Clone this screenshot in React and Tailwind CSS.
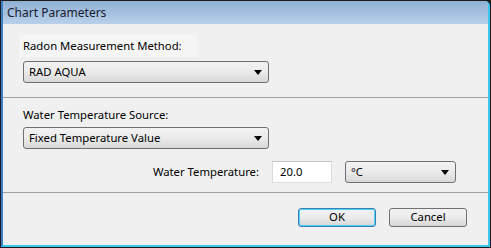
import React from 'react';

function Combo({ value, className = '' }) {
  return (
    <div
      className={`flex items-center justify-between rounded-[3px] border border-[#707070] bg-gradient-to-b from-[#f2f2f2] via-[#ebebeb] to-[#d8d8d8] pl-[5px] pr-[6px] ${className}`}
    >
      <span className="leading-none">{value}</span>
      <svg width="8" height="5" viewBox="0 0 8 5">
        <polygon points="0,0 8,0 4,5" fill="#000" />
      </svg>
    </div>
  );
}

function Button({ label, active }) {
  return (
    <div
      className={`flex items-center justify-center w-[78px] h-[19px] rounded-[3px] border bg-gradient-to-b from-[#f2f2f2] via-[#ebebeb] to-[#d6d6d6] ${
        active ? 'border-[#3c7fb1] shadow-[inset_0_0_0_1px_#48d2f8]' : 'border-[#707070]'
      }`}
    >
      {label}
    </div>
  );
}

export default function App() {
  return (
    <div
      className="w-[491px] h-[248px] bg-[#1c1c1c] p-px text-[11.3px] text-black"
      style={{ fontFamily: '"Noto Sans", "Open Sans", sans-serif' }}
    >
      <div className="h-full flex flex-col rounded-tr-[5px] bg-[#f0f0f0] border-l-2 border-l-[#3d7fc4] border-r-2 border-r-[#3cc6ef] border-b-2 border-b-[#3cc6ef] overflow-hidden">
        {/* Title bar */}
        <div className="h-[23px] flex items-center pl-[4px] bg-gradient-to-b from-[#8fb0d4] to-[#b8d0ea] text-[12px] text-[#1a1a2e]">
          Chart Parameters
        </div>

        {/* Measurement method */}
        <div className="flex flex-col pt-[11px] pl-[16px]">
          <div className="w-[178px] h-[22px] flex items-center pl-[4px] bg-[#f5f5f5]">
            Radon Measurement Method:
          </div>
          <Combo value="RAD AQUA" className="ml-[4px] mt-[4px] w-[246px] h-[22px]" />
        </div>

        <div className="mt-[14px] h-px bg-[#a0a0a0]" />

        {/* Water temperature */}
        <div className="flex flex-col pl-[20px] pr-[32px]">
          <div className="h-[16px] mt-[9px] flex items-center">Water Temperature Source:</div>
          <Combo value="Fixed Temperature Value" className="mt-[4px] w-[246px] h-[22px]" />
          <div className="flex items-center justify-end mt-[12px] h-[22px]">
            <span className="mr-[13px]">Water Temperature:</span>
            <div className="w-[60px] h-[22px] flex items-center pl-[7px] bg-white border border-[#dcdcdc] border-t-[#c5c5c5]">
              20.0
            </div>
            <Combo value="°C" className="ml-[13px] w-[111px] h-[22px]" />
          </div>
        </div>

        <div className="mt-[9px] h-px bg-[#a0a0a0]" />

        {/* Buttons */}
        <div className="flex justify-end gap-[13px] pt-[15px] pr-[21px]">
          <Button label="OK" active />
          <Button label="Cancel" />
        </div>
      </div>
    </div>
  );
}
